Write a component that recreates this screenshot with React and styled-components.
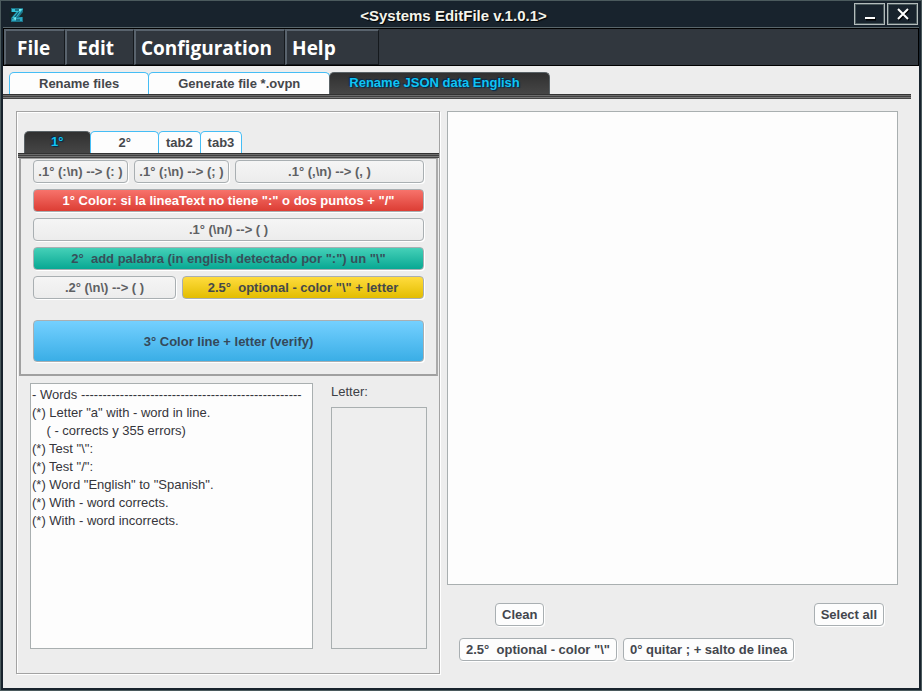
import React, { useState } from 'react';
import styled, { createGlobalStyle, css } from 'styled-components';

const GlobalStyle = createGlobalStyle`
  *, *::before, *::after { box-sizing: border-box; }
  body { margin: 0; background: #ededed; }
  button, textarea { font: inherit; margin: 0; }
`;

const Window = styled.div`
  display: flex;
  flex-direction: column;
  min-height: 100vh;
  border: 1px solid #4b5a5d;
  background: #ededed;
  box-shadow: inset 0 0 0 2px #18232d;
  padding: 0 2px 2px;
  font-family: "Liberation Sans", Arial, sans-serif;
  font-size: 13px;
  color: #3c4046;
`;

const TitleBar = styled.header`
  display: grid;
  grid-template-columns: 1fr auto 1fr;
  align-items: center;
  height: 27px;
  padding: 0 1px 0 6px;
  background: #18232d;
  border-bottom: 1px solid #59666b;
`;

const Title = styled.h1`
  margin: 0;
  padding: 3px 20px 0 0;
  font-size: 15px;
  line-height: 18px;
  font-weight: bold;
  color: #f4f4ec;
  text-shadow: 1px 1px 1px #000;
`;

const WindowControls = styled.div`
  display: flex;
  gap: 2px;
  justify-content: flex-end;
`;

const ControlButton = styled.button`
  display: flex;
  align-items: center;
  justify-content: center;
  width: 31px;
  height: 22px;
  padding: 0;
  background: #18232d;
  border: 1px solid #b4bcbc;
  outline: 1px solid #4b5a5d;
  outline-offset: -2px;
`;

const MenuBar = styled.nav`
  display: flex;
  height: 38px;
  background: #31373e;
  border: 1px solid #000;
`;

const MenuItem = styled.button`
  padding: 1px ${(p) => p.$end}px 0 ${(p) => p.$start}px;
  background: transparent;
  border: 1px solid #15191d;
  border-top: 2px solid #59636d;
  border-left: 2px solid #59636d;
  font-family: "Open Sans", "Noto Sans", sans-serif;
  font-size: 19px;
  line-height: 26px;
  font-weight: bold;
  color: #fff;
`;

const TabStrip = styled.div`
  display: flex;
  padding: 0 6px;
`;

const Tab = styled.button`
  height: 22px;
  padding: 1px ${(p) => p.$end || p.$pad}px 0 ${(p) => p.$pad}px;
  border: 1px solid #45bdf5;
  border-bottom: 0;
  border-radius: 5px 5px 0 0;
  background: #fdfdfd;
  color: #45474b;
  font-size: 13px;
  line-height: 18px;
  font-weight: bold;
  white-space: pre;
  & + & { margin-left: -1px; }
  ${(p) =>
    p.$active &&
    css`
      background: linear-gradient(#303030, #464646);
      border-color: #5a6266;
      color: #10c4f4;
      text-shadow: 1px 1px 1px #05284a, -1px -1px 1px #05284a;
      padding-top: 0;
      padding-bottom: 1px;
    `}
`;

const Rule = styled.div`
  height: 5px;
  background: linear-gradient(#333 0 1px, #6c6c6c 1px 2px, #404040 2px 3px, #777 3px 4px, #444 4px);
`;

const MainTabs = styled.div`
  padding: 6px 8px 0 0;
`;

const Content = styled.main`
  flex: 1;
  display: flex;
  gap: 7px;
  padding: 12px 21px 14px 13px;
`;

const LeftPanel = styled.section`
  flex: 421 1 0;
  min-width: 0;
  display: flex;
  flex-direction: column;
  border: 1px solid #a3a3a3;
  box-shadow: inset 1px 1px 0 #fff, 1px 1px 0 #fff;
  padding: 19px 0 24px 1px;
`;

const ActionPanel = styled.div`
  display: grid;
  gap: 6px;
  margin: 0 1px;
  padding: 1px 12px 12px;
  border: 2px solid #a0a0a0;
  border-top-width: 1px;
  border-right-color: #aaa;
`;

const ButtonRow = styled.div`
  display: grid;
  grid-template-columns: ${(p) => p.$columns || '1fr'};
  gap: 6px;
  margin-top: ${(p) => p.$space || 0}px;
`;

const tones = {
  plain: ['#f5f5f5', '#ececec', '#5e6063'],
  white: ['#fdfdfd', '#fdfdfd', '#43464d'],
  red: ['#f7736b', '#dc3d34', '#ffffff'],
  green: ['#45d0b8', '#08a893', '#36505a'],
  yellow: ['#ffdc3e', '#e3bd00', '#45484a'],
  blue: ['#74d0ff', '#3aaee6', '#34495a'],
};

const Action = styled.button`
  height: ${(p) => (p.$tall ? 42 : 23)}px;
  padding: 1px ${(p) => (p.$tone === 'white' ? 6 : 4)}px 0;
  border: 1px solid #a9afb2;
  border-radius: 4px;
  box-shadow: 1px 1px 0 #fff;
  background: linear-gradient(${(p) => tones[p.$tone][0]}, ${(p) => tones[p.$tone][1]});
  color: ${(p) => tones[p.$tone][2]};
  font-size: 13px;
  line-height: 18px;
  font-weight: bold;
  white-space: pre;
`;

const Lower = styled.div`
  flex: 1;
  display: flex;
  gap: 18px;
  padding: 7px 12px 0;
`;

const TextArea = styled.textarea`
  display: block;
  flex: ${(p) => p.$grow || 1} 1 0;
  min-width: 0;
  padding: 2px 1px;
  border: 1px solid #a9afb0;
  border-radius: 0;
  background: #fdfdfd;
  color: #35353b;
  font-size: 13px;
  line-height: 18px;
  resize: none;
  outline: none;
  &:disabled { background: #eeeeee; }
`;

const LetterColumn = styled.div`
  flex: 97 1 0;
  min-width: 0;
  display: flex;
  flex-direction: column;
  gap: 6px;
`;

const Label = styled.label`
  line-height: 18px;
  font-size: 13px;
`;

const RightPanel = styled.section`
  flex: 451 1 0;
  min-width: 0;
  display: flex;
  flex-direction: column;
`;

const Footer = styled.div`
  display: flex;
  flex-direction: column;
  gap: 12px;
  padding: 18px 14px 13px 12px;
`;

const FooterRow = styled.div`
  display: flex;
  gap: 6px;
  justify-content: ${(p) => (p.$spread ? 'space-between' : 'flex-start')};
  padding-left: ${(p) => (p.$spread ? 36 : 0)}px;
`;

const WORDS = `- Words ---------------------------------------------------
(*) Letter "a" with - word in line.
    ( - corrects y 355 errors)
(*) Test "\\":
(*) Test "/":
(*) Word "English" to "Spanish".
(*) With - word corrects.
(*) With - word incorrects.`;

const MENUS = [
  { label: 'File', start: 11, end: 14 },
  { label: 'Edit', start: 10, end: 19 },
  { label: 'Configuration', start: 5, end: 12 },
  { label: 'Help', start: 5, end: 42 },
];

const MAIN_TABS = [
  { label: 'Rename files', pad: 29 },
  { label: 'Generate file *.ovpn', pad: 29 },
  { label: 'Rename JSON data English', pad: 19, end: 29 },
];

const STEP_TABS = [
  { label: '1°', pad: 26, end: 27 },
  { label: '2°', pad: 27 },
  { label: 'tab2', pad: 7 },
  { label: 'tab3', pad: 7 },
];

function Logo() {
  return (
    <svg width="16" height="20" viewBox="0 0 16 20" aria-hidden="true">
      <circle cx="8" cy="11" r="8" fill="#16262a" />
      <path d="M2 4h12v4l-4 5h4v5H2v-4l5-6H2z" fill="#1c7388" />
      <path d="M3 5h3v2h5V5h3L7 14H3l5-6H3z" fill="#35c3d8" />
      <path d="M8 14l5-1v4h-2v-2H7v2H3v-2z" fill="#2ba6c0" />
      <path d="M10 5h3l-3 3zM4 15l3-2v3z" fill="#7deaea" />
      <path d="M9 8l2-1-4 6H5z" fill="#145a70" />
    </svg>
  );
}

function Tabs({ items, value, onChange, label }) {
  return (
    <TabStrip role="tablist" aria-label={label}>
      {items.map((t, i) => (
        <Tab
          key={t.label}
          role="tab"
          type="button"
          aria-selected={i === value}
          $active={i === value}
          $pad={t.pad}
          $end={t.end}
          onClick={() => onChange(i)}
        >
          {t.label}
        </Tab>
      ))}
    </TabStrip>
  );
}

export default function App() {
  const [mainTab, setMainTab] = useState(2);
  const [stepTab, setStepTab] = useState(0);
  const [text, setText] = useState('');

  return (
    <>
      <GlobalStyle />
      <Window>
        <TitleBar>
          <Logo />
          <Title>{'<Systems EditFile v.1.0.1>'}</Title>
          <WindowControls>
            <ControlButton type="button" aria-label="Minimize">
              <svg width="12" height="14" viewBox="0 0 12 14">
                <path d="M2 12.5h10" stroke="#000" strokeWidth="2" />
                <path d="M1 11h10" stroke="#fff" strokeWidth="2" />
              </svg>
            </ControlButton>
            <ControlButton type="button" aria-label="Close">
              <svg width="14" height="14" viewBox="0 0 14 14">
                <path d="M3 3l10 10M13 3L3 13" stroke="#000" strokeWidth="2" />
                <path d="M2 2l10 10M12 2L2 12" stroke="#fff" strokeWidth="2" />
              </svg>
            </ControlButton>
          </WindowControls>
        </TitleBar>
        <MenuBar>
          {MENUS.map((m) => (
            <MenuItem key={m.label} type="button" $start={m.start} $end={m.end}>
              {m.label}
            </MenuItem>
          ))}
        </MenuBar>
        <MainTabs>
          <Tabs items={MAIN_TABS} value={mainTab} onChange={setMainTab} label="Tools" />
          <Rule />
        </MainTabs>
        <Content>
          <LeftPanel>
            <Tabs items={STEP_TABS} value={stepTab} onChange={setStepTab} label="Steps" />
            <Rule />
            <ActionPanel>
              <ButtonRow $columns="95fr 95fr 189fr">
                <Action type="button" $tone="plain">{'.1° (:\\n) --> (: )'}</Action>
                <Action type="button" $tone="plain">{'.1° (;\\n) --> (; )'}</Action>
                <Action type="button" $tone="plain">{'.1° (,\\n) --> (, )'}</Action>
              </ButtonRow>
              <ButtonRow>
                <Action type="button" $tone="red">{'1° Color: si la lineaText no tiene ":" o dos puntos + "/"'}</Action>
              </ButtonRow>
              <ButtonRow>
                <Action type="button" $tone="plain">{'.1° (\\n/) --> ( )'}</Action>
              </ButtonRow>
              <ButtonRow>
                <Action type="button" $tone="green">{'2°  add palabra (in english detectado por ":") un "\\"'}</Action>
              </ButtonRow>
              <ButtonRow $columns="143fr 242fr">
                <Action type="button" $tone="plain">{'.2° (\\n\\) --> ( )'}</Action>
                <Action type="button" $tone="yellow">{'2.5°  optional - color "\\" + letter'}</Action>
              </ButtonRow>
              <ButtonRow $space={15}>
                <Action type="button" $tone="blue" $tall>{'3° Color line + letter (verify)'}</Action>
              </ButtonRow>
            </ActionPanel>
            <Lower>
              <TextArea $grow={282} aria-label="Words" defaultValue={WORDS} spellCheck={false} />
              <LetterColumn>
                <Label htmlFor="letter">Letter:</Label>
                <TextArea id="letter" disabled />
              </LetterColumn>
            </Lower>
          </LeftPanel>
          <RightPanel>
            <TextArea
              aria-label="Editor text"
              value={text}
              onChange={(e) => setText(e.target.value)}
              spellCheck={false}
            />
            <Footer>
              <FooterRow $spread>
                <Action type="button" $tone="white" onClick={() => setText('')}>Clean</Action>
                <Action type="button" $tone="white">Select all</Action>
              </FooterRow>
              <FooterRow>
                <Action type="button" $tone="white">{'2.5°  optional - color "\\"'}</Action>
                <Action type="button" $tone="white">{'0° quitar ; + salto de linea'}</Action>
              </FooterRow>
            </Footer>
          </RightPanel>
        </Content>
      </Window>
    </>
  );
}
